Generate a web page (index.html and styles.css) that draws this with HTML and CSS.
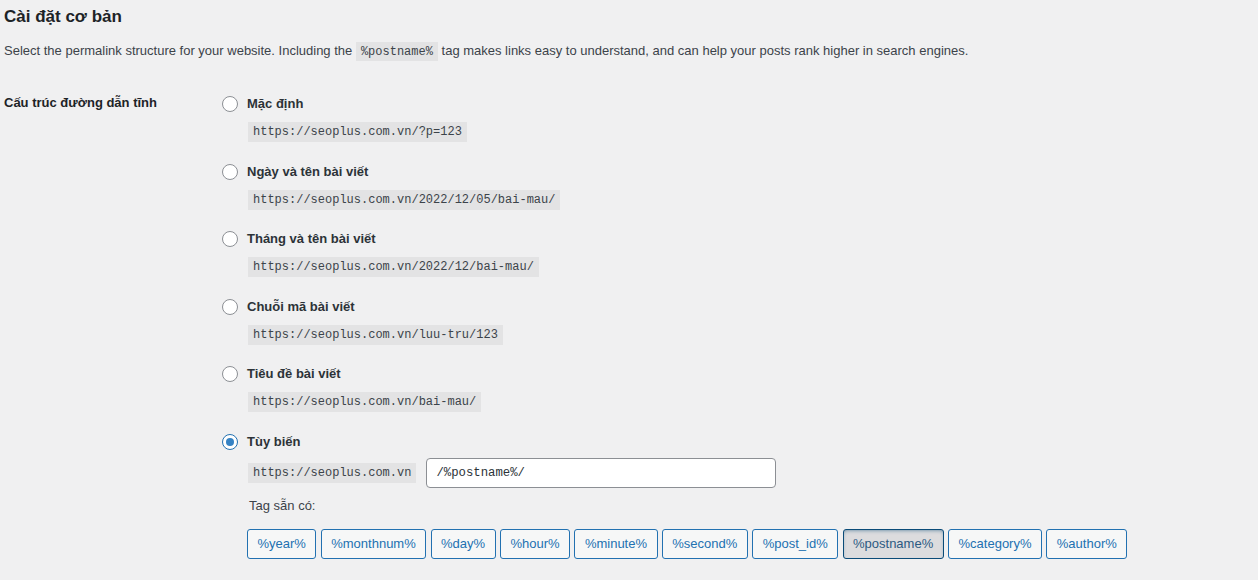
FILE: index.html
```html
<!DOCTYPE html>
<html lang="vi">
<head>
<meta charset="utf-8">
<title>Permalink</title>
<link rel="stylesheet" href="styles.css">
</head>
<body>
<div class="wrap">
  <h2 class="title">Cài đặt cơ bản</h2>
  <p class="desc">Select the permalink structure for your website. Including the <code>%postname%</code> tag makes links easy to understand, and can help your posts rank higher in search engines.</p>
  <div class="form-row">
    <div class="th">Cấu trúc đường dẫn tĩnh</div>
    <div class="td">
      <div class="option">
        <label class="radio-line"><span class="radio"></span>Mặc định</label>
        <code class="example">https://seoplus.com.vn/?p=123</code>
      </div>
      <div class="option">
        <label class="radio-line"><span class="radio"></span>Ngày và tên bài viết</label>
        <code class="example">https://seoplus.com.vn/2022/12/05/bai-mau/</code>
      </div>
      <div class="option">
        <label class="radio-line"><span class="radio"></span>Tháng và tên bài viết</label>
        <code class="example">https://seoplus.com.vn/2022/12/bai-mau/</code>
      </div>
      <div class="option">
        <label class="radio-line"><span class="radio"></span>Chuỗi mã bài viết</label>
        <code class="example">https://seoplus.com.vn/luu-tru/123</code>
      </div>
      <div class="option">
        <label class="radio-line"><span class="radio"></span>Tiêu đề bài viết</label>
        <code class="example">https://seoplus.com.vn/bai-mau/</code>
      </div>
      <div class="option custom">
        <label class="radio-line"><span class="radio checked"></span>Tùy biến</label>
        <div class="custom-row">
          <code class="example">https://seoplus.com.vn</code>
          <input class="text-input" type="text" value="/%postname%/">
        </div>
        <div class="tags-label">Tag sẵn có:</div>
        <div class="tags">
          <button class="tag">%year%</button>
          <button class="tag">%monthnum%</button>
          <button class="tag">%day%</button>
          <button class="tag">%hour%</button>
          <button class="tag">%minute%</button>
          <button class="tag">%second%</button>
          <button class="tag">%post_id%</button>
          <button class="tag active">%postname%</button>
          <button class="tag">%category%</button>
          <button class="tag">%author%</button>
        </div>
      </div>
    </div>
  </div>
</div>
</body>
</html>
```

FILE: styles.css
```css
html, body {
  margin: 0;
  padding: 0;
  background: #f0f0f1;
  color: #3c434a;
  font-family: "Liberation Sans", Arial, sans-serif;
  font-size: 13px;
  line-height: 1.4;
}
.wrap {
  padding: 6px 0 0 4px;
}
.title {
  margin: 0;
  font-size: 17px;
  font-weight: 600;
  color: #1d2327;
  line-height: 22px;
}
.desc {
  margin: 0;
  padding-top: 13px;
  line-height: 20px;
}
code {
  font-family: "Liberation Mono", "DejaVu Sans Mono", monospace;
  font-size: 12px;
  background: #e3e3e4;
  color: #3c434a;
  padding: 3px 5px 2px;
}
.form-row {
  display: grid;
  grid-template-columns: 218px 1fr;
  margin-top: 32px;
}
.th {
  font-weight: 600;
  color: #1d2327;
  line-height: 18px;
  padding-top: 0;
}
.td {
  display: flex;
  flex-direction: column;
  gap: 19.5px;
}
.option {
  display: flex;
  flex-direction: column;
  align-items: flex-start;
}
.radio-line {
  display: flex;
  align-items: center;
  height: 20px;
  line-height: 20px;
  color: #2c3338;
  font-weight: 600;
}
.radio {
  box-sizing: border-box;
  width: 16px;
  height: 16px;
  border: 1px solid #8c8f94;
  border-radius: 50%;
  background: #fff;
  margin-right: 9px;
  display: flex;
  align-items: center;
  justify-content: center;
}
.radio.checked {
  border-color: #2271b1;
}
.radio.checked::after {
  content: "";
  width: 8px;
  height: 8px;
  border-radius: 50%;
  background: #3582c4;
}
.option .example {
  margin: 8px 0 0 26px;
  line-height: 15px;
  display: inline-block;
}
.custom-row {
  display: flex;
  align-items: center;
  margin: 6px 0 0 26px;
  gap: 10px;
}
.custom-row .example {
  margin: 0;
}
.text-input {
  box-sizing: border-box;
  width: 350px;
  height: 30px;
  border: 1px solid #8c8f94;
  border-radius: 4px;
  background: #fff;
  padding: 0 9px;
  font-family: "Liberation Mono", "DejaVu Sans Mono", monospace;
  font-size: 12.3px;
  color: #2c3338;
}
.tags-label {
  margin: 8px 0 0 27px;
  line-height: 20px;
}
.tags {
  display: flex;
  gap: 4.3px;
  margin: 13px 0 0 25px;
}
.tag {
  box-sizing: border-box;
  height: 30px;
  padding: 0 9.5px;
  border: 1px solid #2271b1;
  border-radius: 3px;
  background: #f6f7f7;
  color: #2271b1;
  font-family: "Liberation Sans", Arial, sans-serif;
  font-size: 13px;
  cursor: pointer;
}
.tag.active {
  background: #dcdcde;
  border-color: #0a4b78;
  color: #2c5a82;
  box-shadow: inset 0 2px 5px -3px #0a4b78;
}
```
